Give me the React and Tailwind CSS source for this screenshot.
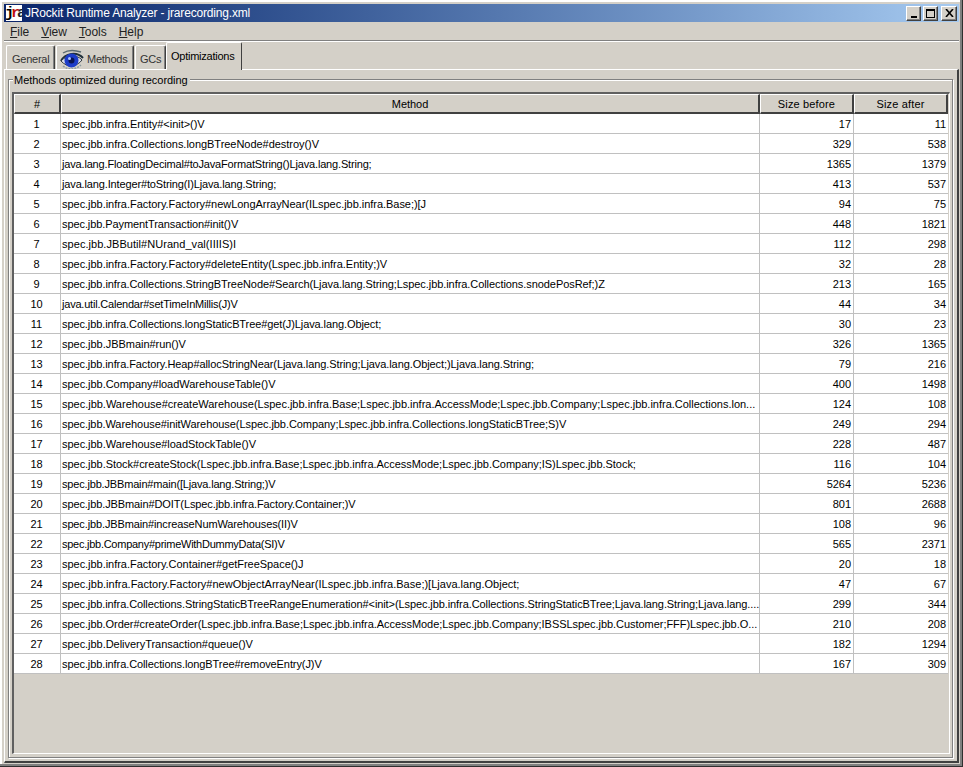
import React from "react";

// fourth value nudges letter spacing so each method string ends where the reference does
const rows = [
  ["spec.jbb.infra.Entity#<init>()V", 17, 11],
  ["spec.jbb.infra.Collections.longBTreeNode#destroy()V", 329, 538],
  ["java.lang.FloatingDecimal#toJavaFormatString()Ljava.lang.String;", 1365, 1379, "tracking-[-0.17px]"],
  ["java.lang.Integer#toString(I)Ljava.lang.String;", 413, 537, "tracking-[-0.14px]"],
  ["spec.jbb.infra.Factory.Factory#newLongArrayNear(ILspec.jbb.infra.Base;)[J", 94, 75],
  ["spec.jbb.PaymentTransaction#init()V", 448, 1821, "tracking-[-0.09px]"],
  ["spec.jbb.JBButil#NUrand_val(IIIIS)I", 112, 298, "tracking-[0.05px]"],
  ["spec.jbb.infra.Factory.Factory#deleteEntity(Lspec.jbb.infra.Entity;)V", 32, 28],
  ["spec.jbb.infra.Collections.StringBTreeNode#Search(Ljava.lang.String;Lspec.jbb.infra.Collections.snodePosRef;)Z", 213, 165, "tracking-[-0.07px]"],
  ["java.util.Calendar#setTimeInMillis(J)V", 44, 34, "tracking-[-0.21px]"],
  ["spec.jbb.infra.Collections.longStaticBTree#get(J)Ljava.lang.Object;", 30, 23, "tracking-[-0.095px]"],
  ["spec.jbb.JBBmain#run()V", 326, 1365],
  ["spec.jbb.infra.Factory.Heap#allocStringNear(Ljava.lang.String;Ljava.lang.Object;)Ljava.lang.String;", 79, 216, "tracking-[-0.085px]"],
  ["spec.jbb.Company#loadWarehouseTable()V", 400, 1498],
  ["spec.jbb.Warehouse#createWarehouse(Lspec.jbb.infra.Base;Lspec.jbb.infra.AccessMode;Lspec.jbb.Company;Lspec.jbb.infra.Collections.lon...", 124, 108, "tracking-[-0.013px]"],
  ["spec.jbb.Warehouse#initWarehouse(Lspec.jbb.Company;Lspec.jbb.infra.Collections.longStaticBTree;S)V", 249, 294, "tracking-[-0.065px]"],
  ["spec.jbb.Warehouse#loadStockTable()V", 228, 487],
  ["spec.jbb.Stock#createStock(Lspec.jbb.infra.Base;Lspec.jbb.infra.AccessMode;Lspec.jbb.Company;IS)Lspec.jbb.Stock;", 116, 104],
  ["spec.jbb.JBBmain#main([Ljava.lang.String;)V", 5264, 5236, "tracking-[-0.17px]"],
  ["spec.jbb.JBBmain#DOIT(Lspec.jbb.infra.Factory.Container;)V", 801, 2688, "tracking-[-0.1px]"],
  ["spec.jbb.JBBmain#increaseNumWarehouses(II)V", 108, 96, "tracking-[-0.125px]"],
  ["spec.jbb.Company#primeWithDummyData(SI)V", 565, 2371, "tracking-[-0.26px]"],
  ["spec.jbb.infra.Factory.Container#getFreeSpace()J", 20, 18],
  ["spec.jbb.infra.Factory.Factory#newObjectArrayNear(ILspec.jbb.infra.Base;)[Ljava.lang.Object;", 47, 67, "tracking-[0.01px]"],
  ["spec.jbb.infra.Collections.StringStaticBTreeRangeEnumeration#<init>(Lspec.jbb.infra.Collections.StringStaticBTree;Ljava.lang.String;Ljava.lang....", 299, 344, "tracking-[-0.09px]"],
  ["spec.jbb.Order#createOrder(Lspec.jbb.infra.Base;Lspec.jbb.infra.AccessMode;Lspec.jbb.Company;IBSSLspec.jbb.Customer;FFF)Lspec.jbb.O...", 210, 208, "tracking-[-0.05px]"],
  ["spec.jbb.DeliveryTransaction#queue()V", 182, 1294],
  ["spec.jbb.infra.Collections.longBTree#removeEntry(J)V", 167, 309, "tracking-[-0.09px]"],
];

const raised =
  "border border-t-white border-l-white border-r-[#404040] border-b-[#404040] shadow-[inset_-1px_-1px_0_#808080]";

const WinButton = ({ children, className }) => (
  <div className={`h-[15px] flex justify-center bg-[#d4d0c8] ${raised} ${className}`}>
    {children}
  </div>
);

const EyeIcon = () => (
  <svg width="24" height="22" viewBox="0 0 24 22">
    <path d="M1 12 C5 4 17 2 23 9" stroke="#20303a" strokeWidth="2" fill="none" />
    <path d="M3 4 C9 0 15 1 21 3" stroke="#5a6a70" strokeWidth="1.5" fill="none" />
    <path d="M1 12 C6 6 17 5 22 11 C17 18 7 19 1 12 Z" fill="#d8dce8" stroke="#303840" strokeWidth="1" />
    <circle cx="11.5" cy="11.5" r="7" fill="#1c3cc8" />
    <circle cx="11.5" cy="11.5" r="3" fill="#0a1450" />
    <circle cx="9.5" cy="9.5" r="1.5" fill="#a8c4ff" />
    <path d="M3 17 C8 21 15 21 21 16" stroke="#8a9aa0" strokeWidth="1.5" fill="none" strokeDasharray="2 1" />
  </svg>
);

const Tab = ({ active, children, className = "" }) => (
  <div
    className={`flex items-center rounded-t-[2px] border-t border-l border-r border-t-white border-l-white border-r-[#404040] bg-[#d4d0c8] tracking-[-0.25px] ${
      active ? "h-[28px] text-black -mb-px relative z-10" : "h-[24px] text-[#333] pt-[4px] shadow-[inset_-1px_0_0_#808080]"
    } ${className}`}
  >
    {children}
  </div>
);

const HeaderCell = ({ children, className = "" }) => (
  <th
    className={`h-[20px] p-0 pt-px font-normal text-center align-middle bg-[#d4d0c8] border-t border-l border-t-white border-l-white border-r-2 border-b-2 border-r-[#404040] border-b-[#404040] ${className}`}
  >
    {children}
  </th>
);

export default function App() {
  return (
    <div className="w-[963px] h-[767px] overflow-hidden bg-[#d4d0c8] pt-[4px] pl-[4px] pr-[4px] pb-[4px] flex flex-col shadow-[inset_-1px_-1px_0_#303030,inset_-3px_-3px_0_#808080,inset_2px_2px_0_white,inset_1px_1px_0_#d4d0c8] font-['Liberation_Sans',Arial,sans-serif] text-[11px] tracking-[-0.035px] text-black">
      {/* TITLE BAR */}
      <div className="h-[18px] flex items-center bg-gradient-to-r from-[#0a246a] to-[#a6caf0] shrink-0">
        <div className="w-[16px] h-[16px] ml-[2px] bg-white flex items-center justify-center overflow-hidden shrink-0 font-bold text-[15px] leading-none font-['Liberation_Mono',monospace] tracking-[-3px]">
          <span className="text-black">j</span>
          <span className="text-[#c01010]">r</span>
          <span className="text-[#202020]">a</span>
        </div>
        <span className="ml-[3px] text-white text-[12px] tracking-[-0.18px] whitespace-nowrap">
          JRockit Runtime Analyzer - jrarecording.xml
        </span>
        <div className="ml-auto flex items-center mr-[2px]">
          <WinButton className="w-[15px] items-end pb-[2px]">
            <div className="w-[6px] h-[2px] bg-black" />
          </WinButton>
          <WinButton className="w-[15px] ml-[2px] items-center">
            <div className="w-[9px] h-[9px] border border-t-2 border-black" />
          </WinButton>
          <WinButton className="w-[16px] ml-[3px] items-center">
            <svg width="9" height="8" viewBox="0 0 9 8">
              <path d="M1 0 L8 8 M8 0 L1 8" stroke="black" strokeWidth="1.6" />
            </svg>
          </WinButton>
        </div>
      </div>

      {/* MENU */}
      <div className="h-[18px] flex items-center gap-[12px] pl-[6px] pt-[2px] text-[12px] text-[#222] shrink-0">
        <span><u>F</u>ile</span>
        <span><u>V</u>iew</span>
        <span><u>T</u>ools</span>
        <span><u>H</u>elp</span>
      </div>
      <div className="h-[2px] border-t border-t-[#808080] border-b border-b-white shrink-0" />

      {/* TABS */}
      <div className="h-[27px] flex items-end pl-[2px] shrink-0">
        <Tab className="w-[49px] pl-[5px]">General</Tab>
        <Tab className="w-[78px] ml-px pl-[3px] gap-[3px]">
          <EyeIcon />
          Methods
        </Tab>
        <Tab className="w-[31px] ml-px pl-[4px]">GCs</Tab>
        <Tab active className="w-[76px] pl-[4px]">Optimizations</Tab>
      </div>

      {/* TAB PANE */}
      <div className="flex-1 min-h-0 border-t border-l border-t-white border-l-white border-r-2 border-b-2 border-r-[#404040] border-b-[#404040] pl-[3px] pr-[4px] pb-[3px] pt-[9px] relative flex">
        <span className="absolute left-[8px] top-[4px] bg-[#d4d0c8] pl-px pr-[2px] leading-[13px]">
          Methods optimized during recording
        </span>
        {/* GROUP BOX */}
        <div className="flex-1 border border-[#808080] shadow-[inset_1px_1px_0_white,1px_1px_0_white] pt-[12px] pl-[3px] pr-[2px] pb-[3px] flex">
          {/* TABLE SCROLL PANE */}
          <div className="flex-1 border-t-2 border-l-2 border-t-[#606060] border-l-[#606060] border-r border-b border-r-white border-b-white">
            <table className="table-fixed border-separate border-spacing-0 w-[934px] bg-white leading-[14px]">
              <colgroup>
                <col className="w-[47px]" />
                <col className="w-[699px]" />
                <col className="w-[94px]" />
                <col className="w-[94px]" />
              </colgroup>
              <thead>
                <tr>
                  <HeaderCell>#</HeaderCell>
                  <HeaderCell>Method</HeaderCell>
                  <HeaderCell className="tracking-[0.15px]">Size before</HeaderCell>
                  <HeaderCell className="tracking-[0.15px]">Size after</HeaderCell>
                </tr>
              </thead>
              <tbody>
                {rows.map((row, i) => (
                  <tr key={i} className="h-[20px]">
                    <td className="p-0 pt-px pr-px text-center border-r border-b border-[#c0c0c0]">{i + 1}</td>
                    <td className={`p-0 pt-px pl-[1px] whitespace-nowrap overflow-hidden border-r border-b border-[#c0c0c0] ${row[3] || ""}`}>
                      {row[0]}
                    </td>
                    <td className="p-0 pt-px pr-[2px] text-right border-r border-b border-[#c0c0c0]">{row[1]}</td>
                    <td className="p-0 pt-px pr-[2px] text-right border-b border-[#c0c0c0]">{row[2]}</td>
                  </tr>
                ))}
              </tbody>
            </table>
          </div>
        </div>
      </div>
    </div>
  );
}
